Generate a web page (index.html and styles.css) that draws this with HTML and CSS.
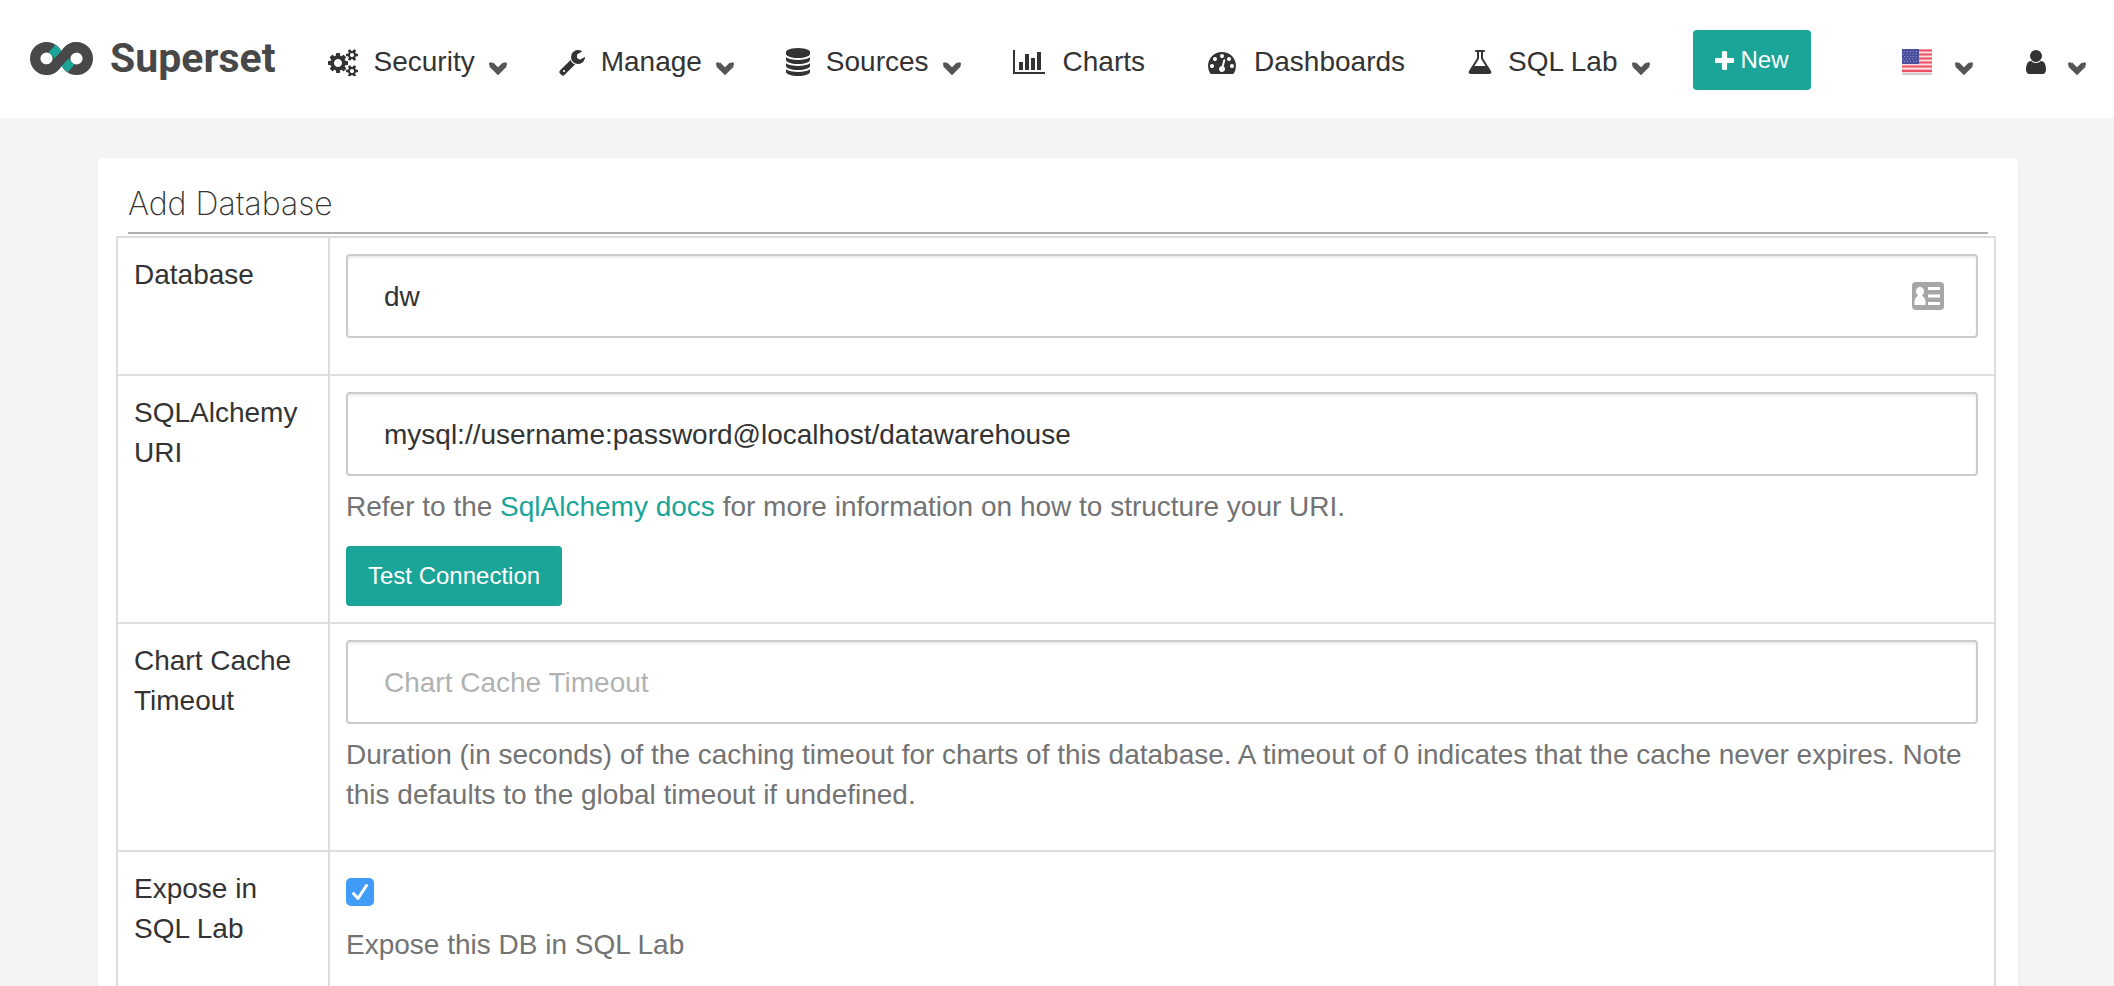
FILE: index.html
```
<!DOCTYPE html>
<html lang="en">
<head>
<meta charset="utf-8">
<title>Superset - Add Database</title>
<link rel="stylesheet" href="styles.css">
</head>
<body>
<svg class="sprite" aria-hidden="true">
  <symbol id="chevron" viewBox="0 0 20 15"><path d="M3.200 3.500L10 10.300l6.800-6.800" fill="none" stroke="#555" stroke-width="5.600"/><circle cx="2.800" cy="3.100" r="1.900" fill="#555"/><circle cx="17.200" cy="3.100" r="1.900" fill="#555"/></symbol>
</svg>
<header class="navbar">
  <a class="brand" href="#">
    <svg class="brand-mark" viewBox="0 0 63 33" aria-hidden="true">
      <g class="mark-dark">
        <circle cx="16.500" cy="16.500" r="11.300"/>
        <circle cx="46.500" cy="16.500" r="11.300"/>
      </g>
      <path class="mark-teal" d="M18.500 10.600L25.400 2.700Q27.300 4 28.900 5.700L41.800 20.500Q43 21.800 44.500 22.400L37.600 30.300Q35.700 29 34.200 27.300L21.200 12.500Q20 11.200 18.500 10.600Z"/>
      <path class="mark-dark" d="M16.500 27.800A11.300 11.300 0 0 0 25 23.900L38 9.100A11.300 11.300 0 0 1 46.500 5.200"/>
    </svg>
    <span>Superset</span>
  </a>
  <nav class="menu" aria-label="Main">
    <a class="menu-item" href="#">
      <svg class="icon icon-cogs" viewBox="0 0 1920 1792" aria-hidden="true"><path d="M896 960q0-106-75-181t-181-75-181 75-75 181 75 181 181 75 181-75 75-181zm768 512q0-52-38-90t-90-38-90 38-38 90q0 53 37.500 90.500t90.500 37.500 90.500-37.500 37.500-90.500zm0-1024q0-52-38-90t-90-38-90 38-38 90q0 53 37.500 90.500t90.500 37.500 90.500-37.500 37.500-90.500zm-384 421v185q0 10-7 19.500t-16 10.500l-155 24q-11 35-32 76 34 48 90 115 7 11 7 20 0 12-7 19-23 30-82.500 89.500t-78.500 59.500q-11 0-21-7l-115-90q-37 19-77 31-11 108-23 155-7 24-30 24h-186q-11 0-20-7.500t-10-17.500l-23-153q-34-10-75-31l-118 89q-7 7-20 7-11 0-21-8-144-133-144-160 0-9 7-19 10-14 41-53t47-61q-23-44-35-82l-152-24q-10-1-17-9.500t-7-19.500v-185q0-10 7-19.500t16-10.500l155-24q11-35 32-76-34-48-90-115-7-11-7-20 0-12 7-20 22-30 82-89t79-59q11 0 21 7l115 90q34-18 77-32 11-108 23-154 7-24 30-24h186q11 0 20 7.500t10 17.500l23 153q34 10 75 31l118-89q8-7 20-7 11 0 21 8 144 133 144 160 0 8-7 19-12 16-42 54t-45 60q23 48 34 82l152 23q10 2 17 10.500t7 19.500zm640 533v140q0 16-149 31-12 27-30 52 51 113 51 138 0 4-4 7-122 71-124 71-8 0-46-47t-52-68q-20 2-30 2t-30-2q-14 21-52 68t-46 47q-2 0-124-71-4-3-4-7 0-25 51-138-18-25-30-52-149-15-149-31v-140q0-16 149-31 13-29 30-52-51-113-51-138 0-4 4-7 4-2 35-20t59-34 30-16q8 0 46 46.500t52 67.500q20-2 30-2t30 2q51-71 92-112l6-2q4 0 124 70 4 3 4 7 0 25-51 138 17 23 30 52 149 15 149 31zm0-1024v140q0 16-149 31-12 27-30 52 51 113 51 138 0 4-4 7-122 71-124 71-8 0-46-47t-52-68q-20 2-30 2t-30-2q-14 21-52 68t-46 47q-2 0-124-71-4-3-4-7 0-25 51-138-18-25-30-52-149-15-149-31v-140q0-16 149-31 13-29 30-52-51-113-51-138 0-4 4-7 4-2 35-20t59-34 30-16q8 0 46 46.500t52 67.500q20-2 30-2t30 2q51-71 92-112l6-2q4 0 124 70 4 3 4 7 0 25-51 138 17 23 30 52 149 15 149 31z"/></svg>
      <span>Security</span>
      <svg class="chevron" aria-hidden="true"><use href="#chevron"/></svg>
    </a>
    <a class="menu-item" href="#">
      <svg class="icon icon-wrench" viewBox="64 0 1664 1792" aria-hidden="true"><path d="M448 1472q0-26-19-45t-45-19-45 19-19 45 19 45 45 19 45-19 19-45zm644-420l-682 682q-37 37-90 37-52 0-91-37l-106-108q-38-36-38-90 0-53 38-91l681-681q39 98 114.500 173.500t173.500 114.500zm634-435q0 39-23 106-47 134-164.500 217.500t-258.500 83.500q-185 0-316.500-131.500t-131.500-316.500 131.500-316.500 316.500-131.500q58 0 121.500 16.500t107.500 46.500q16 11 16 28t-16 28l-293 169v224l193 107q5-3 79-48.500t135.500-81 70.500-35.500q15 0 23.500 10t8.500 25z"/></svg>
      <span>Manage</span>
      <svg class="chevron" aria-hidden="true"><use href="#chevron"/></svg>
    </a>
    <a class="menu-item" href="#">
      <svg class="icon icon-database" viewBox="128 0 1536 1792" aria-hidden="true"><path d="M896 768q237 0 443-43t325-127v170q0 69-103 128t-280 93.500-385 34.500-385-34.500-280-93.500-103-128v-170q119 84 325 127t443 43zm0 768q237 0 443-43t325-127v170q0 69-103 128t-280 93.500-385 34.500-385-34.500-280-93.500-103-128v-170q119 84 325 127t443 43zm0-384q237 0 443-43t325-127v170q0 69-103 128t-280 93.500-385 34.500-385-34.500-280-93.500-103-128v-170q119 84 325 127t443 43zm0-1152q208 0 385 34.500t280 93.500 103 128v128q0 69-103 128t-280 93.500-385 34.500-385-34.500-280-93.500-103-128v-128q0-69 103-128t280-93.500 385-34.500z"/></svg>
      <span>Sources</span>
      <svg class="chevron" aria-hidden="true"><use href="#chevron"/></svg>
    </a>
    <a class="menu-item plain" href="#">
      <svg class="icon icon-chart" viewBox="0 0 2048 1792" aria-hidden="true"><path d="M640 896v512h-256v-512h256zm384-512v1024h-256v-1024h256zm1024 1152v128h-2048v-1536h128v1408h1920zm-640-896v768h-256v-768h256zm384-384v1152h-256v-1152h256z"/></svg>
      <span>Charts</span>
    </a>
    <a class="menu-item plain" href="#">
      <svg class="icon icon-gauge" viewBox="0 0 1792 1792" aria-hidden="true"><path d="M384 1152q0-53-37.500-90.500t-90.500-37.500-90.500 37.500-37.500 90.500 37.500 90.500 90.500 37.500 90.500-37.500 37.500-90.500zm192-448q0-53-37.500-90.500t-90.500-37.500-90.500 37.500-37.500 90.500 37.500 90.500 90.500 37.500 90.500-37.500 37.500-90.500zm428 481l101-382q6-26-7.500-48.500t-38.500-29.500-48 6.500-30 39.500l-101 382q-60 5-107 43.500t-63 98.500q-20 77 20 146t117 89 146-20 89-117q16-60-6-117t-72-91zm660-33q0-53-37.500-90.500t-90.500-37.500-90.500 37.500-37.500 90.500 37.500 90.500 90.500 37.500 90.500-37.500 37.500-90.500zm-640-640q0-53-37.500-90.500t-90.500-37.500-90.500 37.500-37.500 90.500 37.500 90.500 90.500 37.500 90.500-37.500 37.500-90.500zm448 192q0-53-37.500-90.500t-90.500-37.500-90.500 37.500-37.500 90.500 37.500 90.500 90.500 37.500 90.500-37.500 37.500-90.500zm320 448q0 261-141 483-19 29-54 29h-1402q-35 0-54-29-141-221-141-483 0-182 71-348t191-286 286-191 348-71 348 71 286 191 191 286 71 348z"/></svg>
      <span>Dashboards</span>
    </a>
    <a class="menu-item" href="#">
      <svg class="icon icon-flask" viewBox="128 0 1536 1792" aria-hidden="true"><path d="M1591 1448q56 89 21.500 152.500t-140.500 63.500h-1152q-106 0-140.500-63.500t21.500-152.500l503-793v-399h-64q-26 0-45-19t-19-45 19-45 45-19h512q26 0 45 19t19 45-19 45-45 19h-64v399zm-779-725l-272 429h712l-272-429-20-31v-436h-128v436z"/></svg>
      <span>SQL Lab</span>
      <svg class="chevron" aria-hidden="true"><use href="#chevron"/></svg>
    </a>
  </nav>
  <button class="btn btn-new" type="button">
    <svg class="icon-plus" viewBox="192 128 1408 1408" aria-hidden="true"><path d="M1600 736v192q0 40-28 68t-68 28h-416v416q0 40-28 68t-68 28h-192q-40 0-68-28t-28-68v-416h-416q-40 0-68-28t-28-68v-192q0-40 28-68t68-28h416v-416q0-40 28-68t68-28h192q40 0 68 28t28 68v416h416q40 0 68 28t28 68z"/></svg>
    <span>New</span>
  </button>
  <div class="account">
    <a class="account-item" href="#" aria-label="Language">
      <svg class="flag" viewBox="0 0 32 28" aria-hidden="true">
        <rect x="1" y="2" width="30" height="25" rx="1" fill="#ccc"/>
        <rect x="1" y="1" width="30" height="24" fill="#fadcdf"/>
        <path d="M1 2.500h30M1 6.500h30M1 10.500h30M1 14.500h30M1 18.500h30M1 22.800h30" stroke="#ee5062" stroke-width="2.200"/>
        <rect x="1" y="1" width="17" height="15" fill="#4a4f9e"/>
        <path d="M3 3.500h14M2 6h14M3 8.500h14M2 11h14M3 13.500h14" stroke="#9094c8" stroke-width="1" stroke-dasharray="1 2"/>
      </svg>
      <svg class="chevron" aria-hidden="true"><use href="#chevron"/></svg>
    </a>
    <a class="account-item" href="#" aria-label="User">
      <svg class="icon icon-user" viewBox="256 0 1280 1792" aria-hidden="true"><path d="M1536 1399q0 109-62.500 187t-150.500 78h-854q-88 0-150.500-78t-62.500-187q0-85 8.500-160.500t31.500-152 58.500-131 94-89 134.500-34.500q131 128 313 128t313-128q76 0 134.500 34.500t94 89 58.500 131 31.500 152 8.500 160.500zm-256-887q0 159-112.500 271.500t-271.500 112.500-271.500-112.500-112.500-271.500 112.500-271.500 271.500-112.500 271.500 112.500 112.500 271.500z"/></svg>
      <svg class="chevron" aria-hidden="true"><use href="#chevron"/></svg>
    </a>
  </div>
</header>
<main class="panel">
  <h1 class="title">Add Database</h1>
  <form class="form">
    <table class="fields">
      <tr>
        <th scope="row"><label for="database">Database</label></th>
        <td>
          <div class="input-wrap">
            <input class="input" id="database" type="text" value="dw">
            <svg class="contact" viewBox="0 0 32 28" aria-hidden="true">
              <rect width="32" height="28" rx="4" fill="#a6a6a6"/>
              <path fill="#fff" d="M16 5h12v3H16zM16 12.500h12v3H16zM16 20h12v3H16z"/>
              <ellipse cx="8" cy="9.500" rx="4" ry="4.500" fill="#fff"/>
              <path fill="#fff" d="M6 12h4v2q3.500 1.500 3.500 6v3h-11v-3q0-4.500 3.500-6z"/>
            </svg>
          </div>
          <div class="spacer"></div>
        </td>
      </tr>
      <tr>
        <th scope="row"><label for="uri">SQLAlchemy URI</label></th>
        <td>
          <input class="input" id="uri" type="text" value="mysql://username:password@localhost/datawarehouse">
          <p class="help">Refer to the <a href="#">SqlAlchemy docs</a> for more information on how to structure your URI.</p>
          <button class="btn" type="button">Test Connection</button>
        </td>
      </tr>
      <tr>
        <th scope="row"><label for="timeout">Chart Cache Timeout</label></th>
        <td>
          <input class="input" id="timeout" type="text" placeholder="Chart Cache Timeout">
          <p class="help">Duration (in seconds) of the caching timeout for charts of this database. A timeout of 0 indicates that the cache never expires. Note this defaults to the global timeout if undefined.</p>
        </td>
      </tr>
      <tr>
        <th scope="row"><label for="expose">Expose in SQL Lab</label></th>
        <td>
          <div class="check-wrap">
            <input class="check" id="expose" type="checkbox" checked>
            <svg class="tick" viewBox="0 0 28 28" aria-hidden="true"><path d="M7.500 15.500l4.500 5L20.500 7.500" fill="none" stroke="#fff" stroke-width="3" stroke-linecap="round" stroke-linejoin="round"/></svg>
          </div>
          <p class="help">Expose this DB in SQL Lab</p>
        </td>
      </tr>
    </table>
  </form>
</main>
</body>
</html>
```
FILE: styles.css
```
* {
  box-sizing: border-box;
}

body {
  margin: 0;
  background: #f4f4f4;
  color: #333;
  font: 28px/40px "Liberation Sans", Arial, sans-serif;
}

a {
  color: #1ba599;
  text-decoration: none;
}

.sprite {
  display: none;
}

.navbar {
  display: flex;
  align-items: flex-start;
  height: 118px;
  padding: 0 27px 0 30px;
  background: #fff;
}

.brand {
  display: flex;
  align-items: center;
  gap: 17px;
  margin: 36px 52px 0 0;
  color: #484848;
  font: bold 41px/44px Roboto, sans-serif;
}

.brand-mark {
  width: 63px;
  height: 33px;
}

.mark-teal {
  fill: #1ba599;
}

.mark-dark {
  fill: none;
  stroke: #484848;
  stroke-width: 10.4px;
}

.menu {
  display: flex;
  gap: 51px;
  margin-top: 42px;
}

.menu-item {
  display: flex;
  align-items: center;
  color: #333;
  white-space: nowrap;
}

.plain {
  margin-right: 12px;
}

.icon {
  height: 28px;
  margin-right: 16px;
  fill: #333;
}

.icon-cogs {
  width: 30px;
}

.icon-wrench {
  width: 26px;
}

.icon-database,
.icon-flask {
  width: 24px;
}

.plain .icon {
  margin-right: 18px;
}

.icon-chart {
  width: 32px;
}

.icon-gauge {
  width: 28px;
}

.chevron {
  width: 20px;
  height: 15px;
  margin: 13px 0 0 13px;
}

.btn {
  display: inline-flex;
  align-items: center;
  height: 60px;
  padding: 0 22px;
  border: 0;
  border-radius: 4px;
  background: #1ba599;
  color: #fff;
  font: 24px/36px "Liberation Sans", Arial, sans-serif;
}

.btn-new {
  gap: 7px;
  margin: 30px 0 0 42px;
}

.icon-plus {
  width: 19px;
  height: 19px;
  fill: #fff;
}

.account {
  display: flex;
  gap: 52px;
  margin: 42px 0 0 auto;
}

.account-item {
  display: flex;
  align-items: center;
  height: 40px;
}

.flag {
  width: 32px;
  height: 28px;
  margin-right: 8px;
}

.account .icon {
  margin-right: 8px;
}

.icon-user {
  width: 20px;
}

.panel {
  min-height: 828px;
  margin: 40px 96px 0 98px;
  padding: 22px 30px 0;
  border-radius: 4px;
  background: #fff;
  box-shadow: 0 1px 2px rgba(0, 0, 0, 0.05);
}

.title {
  margin: 0;
  padding-bottom: 4px;
  border-bottom: 2px solid #b0b0b0;
  font: 200 32px/48px Inter, "Liberation Sans", sans-serif;
}

.form {
  margin: 2px -8px 0 -12px;
}

.fields {
  width: 100%;
  border-collapse: collapse;
  table-layout: fixed;
}

.fields th,
.fields td {
  padding: 16px;
  border: 2px solid #ddd;
  vertical-align: top;
}

.fields th {
  width: 212px;
  padding-top: 17px;
  font-weight: normal;
  text-align: left;
}

.input-wrap,
.check-wrap {
  position: relative;
}

.input {
  display: block;
  width: 100%;
  height: 84px;
  padding: 2px 36px 0;
  border: 2px solid #ccc;
  border-radius: 4px;
  background: #fff;
  box-shadow: inset 0 2px 2px rgba(0, 0, 0, 0.075);
  color: #333;
  font: 28px/40px "Liberation Sans", Arial, sans-serif;
}

.input::placeholder {
  color: #b2b2b2;
  opacity: 1;
}

.contact {
  position: absolute;
  top: 28px;
  right: 34px;
  width: 32px;
  height: 28px;
}

.spacer {
  height: 20px;
}

.help {
  margin: 11px 0 19px;
  color: #737373;
}

.check-wrap {
  height: 46px;
  padding-top: 10px;
}

.check {
  display: block;
  appearance: none;
  width: 28px;
  height: 28px;
  margin: 0;
  border-radius: 5px;
  background: #419bf9;
}

.tick {
  position: absolute;
  top: 10px;
  left: 0;
  width: 28px;
  height: 28px;
  pointer-events: none;
}
```
